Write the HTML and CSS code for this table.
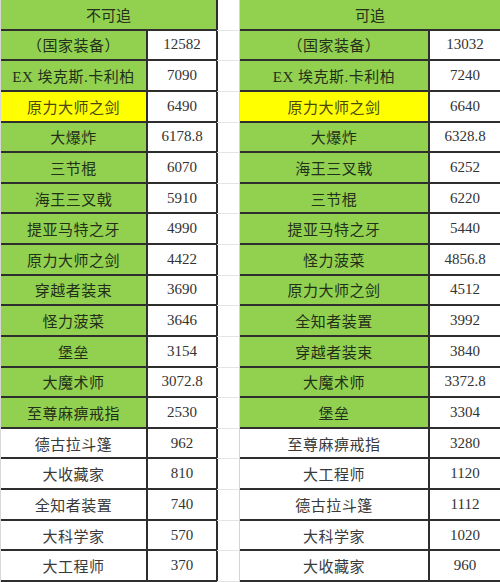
FILE: index.html
```html
<!DOCTYPE html>
<html lang="zh">
<head>
<meta charset="utf-8">
<link rel="stylesheet" href="styles.css">
</head>
<body>
<div class="page">
  <div class="tbl tbl-left">
    <div class="head">不可追</div>
    <div class="name g">（国家装备）</div><div class="val">12582</div>
    <div class="name g">EX 埃克斯.卡利柏</div><div class="val">7090</div>
    <div class="name y">原力大师之剑</div><div class="val">6490</div>
    <div class="name g">大爆炸</div><div class="val">6178.8</div>
    <div class="name g">三节棍</div><div class="val">6070</div>
    <div class="name g">海王三叉戟</div><div class="val">5910</div>
    <div class="name g">提亚马特之牙</div><div class="val">4990</div>
    <div class="name g">原力大师之剑</div><div class="val">4422</div>
    <div class="name g">穿越者装束</div><div class="val">3690</div>
    <div class="name g">怪力菠菜</div><div class="val">3646</div>
    <div class="name g">堡垒</div><div class="val">3154</div>
    <div class="name g">大魔术师</div><div class="val">3072.8</div>
    <div class="name g">至尊麻痹戒指</div><div class="val">2530</div>
    <div class="name w">德古拉斗篷</div><div class="val">962</div>
    <div class="name w">大收藏家</div><div class="val">810</div>
    <div class="name w">全知者装置</div><div class="val">740</div>
    <div class="name w">大科学家</div><div class="val">570</div>
    <div class="name w">大工程师</div><div class="val">370</div>
  </div>
  <div class="gap">
    <div></div><div></div><div></div><div></div><div></div><div></div><div></div><div></div><div></div><div></div>
    <div></div><div></div><div></div><div></div><div></div><div></div><div></div><div></div><div></div>
  </div>
  <div class="tbl tbl-right">
    <div class="head">可追</div>
    <div class="name g">（国家装备）</div><div class="val">13032</div>
    <div class="name g">EX 埃克斯.卡利柏</div><div class="val">7240</div>
    <div class="name y">原力大师之剑</div><div class="val">6640</div>
    <div class="name g">大爆炸</div><div class="val">6328.8</div>
    <div class="name g">海王三叉戟</div><div class="val">6252</div>
    <div class="name g">三节棍</div><div class="val">6220</div>
    <div class="name g">提亚马特之牙</div><div class="val">5440</div>
    <div class="name g">怪力菠菜</div><div class="val">4856.8</div>
    <div class="name g">原力大师之剑</div><div class="val">4512</div>
    <div class="name g">全知者装置</div><div class="val">3992</div>
    <div class="name g">穿越者装束</div><div class="val">3840</div>
    <div class="name g">大魔术师</div><div class="val">3372.8</div>
    <div class="name g">堡垒</div><div class="val">3304</div>
    <div class="name w">至尊麻痹戒指</div><div class="val">3280</div>
    <div class="name w">大工程师</div><div class="val">1120</div>
    <div class="name w">德古拉斗篷</div><div class="val">1112</div>
    <div class="name w">大科学家</div><div class="val">1020</div>
    <div class="name w">大收藏家</div><div class="val">960</div>
  </div>
</div>
</body>
</html>
```

FILE: styles.css
```css
* { box-sizing: border-box; }
html, body { margin: 0; padding: 0; background: #fff; }
body {
  font-family: "Liberation Serif", "Noto Sans CJK SC", serif;
  font-size: 15px;
}
.page {
  display: flex;
  width: 500px;
  height: 582px;
  overflow: hidden;
}
.tbl {
  display: grid;
  grid-template-rows: repeat(19, 1fr);
  height: 582px;
}
.tbl-left { width: 217px; grid-template-columns: 147px 70px; border-left: 1px solid #d8d8d8; }
.tbl-right { width: 260px; grid-template-columns: 190px 70px; }
.tbl > div {
  display: flex;
  align-items: center;
  justify-content: center;
  border-bottom: 2px solid #2e2e2e;
  white-space: nowrap;
}
.head {
  grid-column: 1 / 3;
  background: #92d050;
  color: #24301a;
  font-family: "Noto Sans CJK SC", sans-serif;
  font-size: 15px;
  border-right: 2px solid #2e2e2e;
}
.tbl-right .head { border-right: none; }
.name {
  font-family: "Liberation Serif", "Noto Sans CJK SC", serif;
  border-right: 2px solid #2e2e2e;
  letter-spacing: 0.5px;
}
.name.g { background: #92d050; color: #22301a; }
.name.y { background: #ffff00; color: #4a4a10; }
.name.w { background: #fff; color: #3a3a3a; }
.val {
  background: #fff;
  color: #333;
  border-right: 2px solid #2e2e2e;
}
.tbl-right .val { border-right: none; }
.gap {
  width: 23px;
  display: grid;
  grid-template-rows: repeat(19, 1fr);
  height: 582px;
  border-right: 1px solid #d4d4d4;
}
.gap > div { border-bottom: 1px solid #e4e4e4; }
```
